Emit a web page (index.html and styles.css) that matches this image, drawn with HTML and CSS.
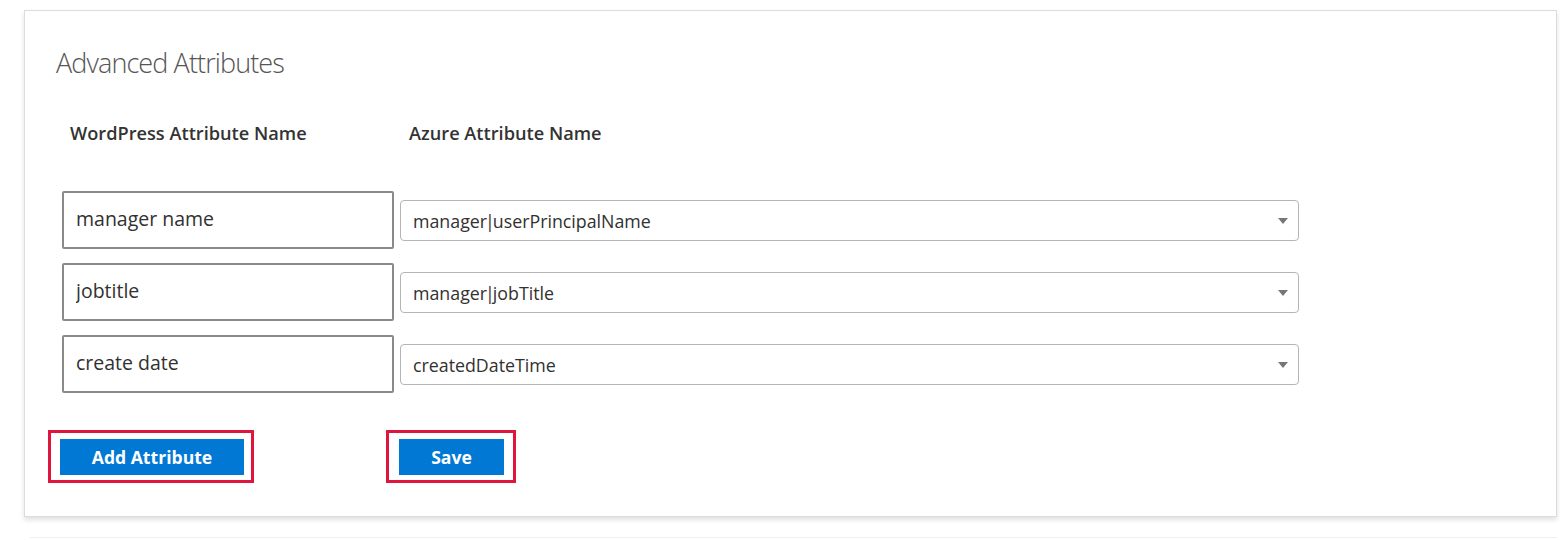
FILE: index.html
```html
<!DOCTYPE html>
<html>
<head>
<meta charset="utf-8">
<link rel="stylesheet" href="styles.css">
</head>
<body>
<div class="card">
  <h2 class="title">Advanced Attributes</h2>
  <div class="headers">
    <div class="h-wp">WordPress Attribute Name</div>
    <div class="h-az">Azure Attribute Name</div>
  </div>
  <div class="rows">
    <div class="row">
      <input class="wp-input" type="text" value="manager name">
      <div class="select"><span>manager<span class="pipe">|</span>userPrincipalName</span><svg class="arrow" width="10" height="6" viewBox="0 0 10 6"><path d="M0 0H10L5 6Z" fill="#777"/></svg></div>
    </div>
    <div class="row">
      <input class="wp-input" type="text" value="jobtitle">
      <div class="select"><span>manager<span class="pipe">|</span>jobTitle</span><svg class="arrow" width="10" height="6" viewBox="0 0 10 6"><path d="M0 0H10L5 6Z" fill="#777"/></svg></div>
    </div>
    <div class="row">
      <input class="wp-input" type="text" value="create date">
      <div class="select"><span>createdDateTime</span><svg class="arrow" width="10" height="6" viewBox="0 0 10 6"><path d="M0 0H10L5 6Z" fill="#777"/></svg></div>
    </div>
  </div>
  <div class="actions">
    <div class="hl hl-add"><button class="btn btn-add">Add Attribute</button></div>
    <div class="hl hl-save"><button class="btn btn-save">Save</button></div>
  </div>
</div>
<div class="next-card"></div>
</body>
</html>
```

FILE: styles.css
```css
html, body {
  margin: 0;
  padding: 0;
  background: #ffffff;
  font-family: "Open Sans", "Noto Sans", "Liberation Sans", sans-serif;
  color: #323130;
}

.card {
  margin: 10px 0 0 24px;
  width: 1533px;
  height: 507px;
  box-sizing: border-box;
  border: 1px solid #dcdcdc;
  box-shadow: 0 3px 5px rgba(0, 0, 0, 0.12);
  background: #fff;
  padding: 0;
}

.title {
  margin: 35px 0 0 31px;
  font-weight: 300;
  font-size: 27px;
  line-height: 34px;
  color: #555;
  letter-spacing: -0.9px;
}

.headers {
  display: flex;
  margin: 41px 0 0 45px;
  font-weight: 600;
  font-size: 18.2px;
  line-height: 24px;
  color: #333;
}

.h-wp {
  width: 339px;
}

.rows {
  display: flex;
  flex-direction: column;
  gap: 14px;
  margin: 46px 0 0 37px;
}

.row {
  display: flex;
  align-items: flex-start;
  gap: 6px;
}

.wp-input {
  width: 332px;
  height: 58px;
  box-sizing: border-box;
  border: 2px solid #8a8a8a;
  border-radius: 2px;
  padding: 0 0 3px 12px;
  font-family: inherit;
  font-size: 19.5px;
  color: #323130;
  background: #fff;
  outline: none;
}

.select {
  margin-top: 9px;
  width: 899px;
  height: 41px;
  box-sizing: border-box;
  border: 1px solid #b5b5b5;
  border-radius: 4px;
  display: flex;
  align-items: center;
  justify-content: space-between;
  padding: 0 10px 0 12px;
  font-size: 17.8px;
  color: #323130;
}

.pipe {
  margin: 0 -2px;
}

.arrow {
  display: block;
}

.actions {
  display: flex;
  margin: 37px 0 0 23px;
  gap: 132px;
}

.hl {
  border: 3px solid #e0153d;
  padding: 6px 7px 5px 9px;
}

.hl-save {
  padding: 6px 9px 5px 10px;
}

.btn {
  display: block;
  height: 36px;
  box-sizing: border-box;
  border: none;
  background: #0078d4;
  color: #fff;
  font-family: inherit;
  font-weight: 700;
  font-size: 17.6px;
  padding: 0;
  cursor: pointer;
}

.btn-add {
  width: 184px;
}

.btn-save {
  width: 105px;
}

.next-card {
  margin: 20px 0 0 30px;
  width: 1527px;
  border-top: 1px solid #efefef;
}
```
